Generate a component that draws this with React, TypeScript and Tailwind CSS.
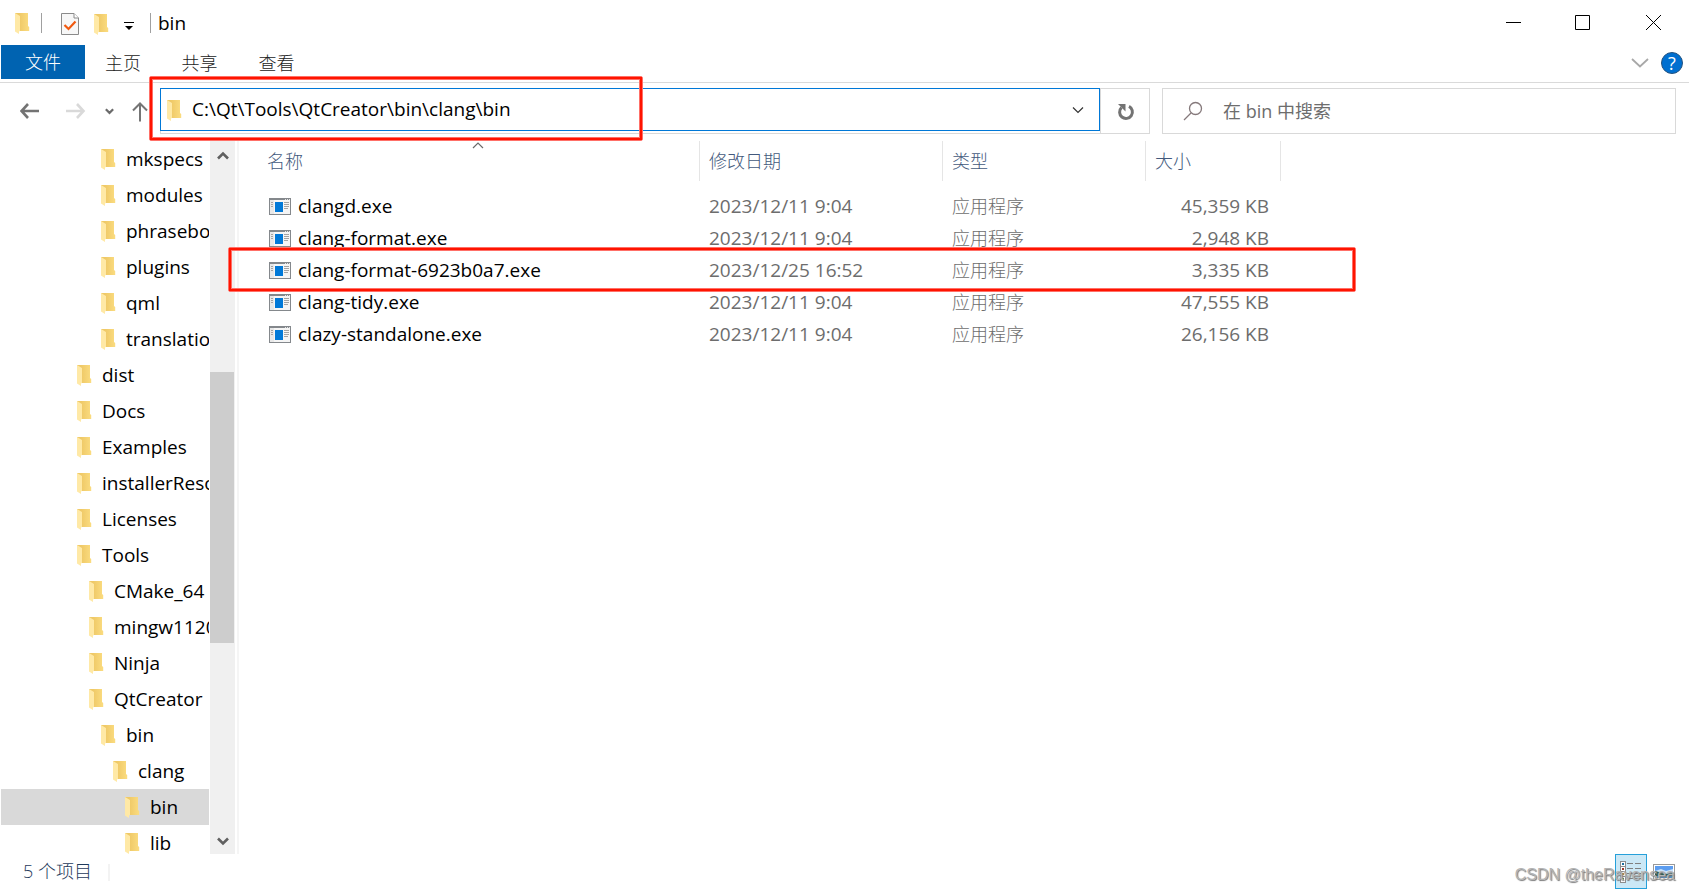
import type { ReactNode } from "react";

type TreeItem = { name: string; level: 0 | 1 | 2 | 3 | 4; selected?: boolean };

const indents = {
  0: "pl-[77px]",
  1: "pl-[89px]",
  2: "pl-[101px]",
  3: "pl-[113px]",
  4: "pl-[125px]",
};

const tree: TreeItem[] = [
  { name: "mkspecs", level: 2 },
  { name: "modules", level: 2 },
  { name: "phrasebooks", level: 2 },
  { name: "plugins", level: 2 },
  { name: "qml", level: 2 },
  { name: "translations", level: 2 },
  { name: "dist", level: 0 },
  { name: "Docs", level: 0 },
  { name: "Examples", level: 0 },
  { name: "installerResources", level: 0 },
  { name: "Licenses", level: 0 },
  { name: "Tools", level: 0 },
  { name: "CMake_64", level: 1 },
  { name: "mingw1120_64", level: 1 },
  { name: "Ninja", level: 1 },
  { name: "QtCreator", level: 1 },
  { name: "bin", level: 2 },
  { name: "clang", level: 3 },
  { name: "bin", level: 4, selected: true },
  { name: "lib", level: 4 },
];

const files = [
  { name: "clangd.exe", date: "2023/12/11 9:04", size: "45,359 KB" },
  { name: "clang-format.exe", date: "2023/12/11 9:04", size: "2,948 KB" },
  { name: "clang-format-6923b0a7.exe", date: "2023/12/25 16:52", size: "3,335 KB", marked: true },
  { name: "clang-tidy.exe", date: "2023/12/11 9:04", size: "47,555 KB" },
  { name: "clazy-standalone.exe", date: "2023/12/11 9:04", size: "26,156 KB" },
];

function FolderIcon() {
  return (
    <svg width="15" height="22" viewBox="0 0 15 22" className="shrink-0" aria-hidden="true">
      <defs>
        <linearGradient id="folder-back" x1="0" x2="1">
          <stop offset="0.3" stopColor="#efc967" />
          <stop offset="1" stopColor="#fbdc80" />
        </linearGradient>
      </defs>
      <path d="M0 1H13V14L14.2 15V19H3Z" fill="url(#folder-back)" />
      <path d="M0 1L5 4V19L4 19.5V22L0 19.5Z" fill="#ffe9a6" />
    </svg>
  );
}

function AppIcon() {
  return (
    <svg width="22" height="17" viewBox="0 0 22 17" className="shrink-0" shapeRendering="crispEdges" aria-hidden="true">
      <rect width="22" height="17" fill="#84888c" />
      <rect x="1" y="2" width="20" height="14" fill="#f5f5f5" />
      <rect x="1" y="2" width="4" height="14" fill="#e8e8e8" />
      <path d="M16 1h1v1h-1zM18 1h1v1h-1zM20 1h1v1h-1z" fill="#e6e6e6" />
      <rect x="6" y="4" width="8" height="10" fill="#0078d7" />
      <path d="M2 4h2v1H2zM2 6h2v1H2zM2 8h2v1H2zM15 4h5v1h-5zM15 6h5v1h-5zM15 8h5v1h-5zM15 10h4v1h-4z" fill="#a3a3a3" />
    </svg>
  );
}

function Chevron({ d, color, width = 1, size = 12 }: { d: string; color: string; width?: number; size?: number }) {
  return (
    <svg width={size} height={size} viewBox="0 0 12 12" fill="none" stroke={color} strokeWidth={width} aria-hidden="true">
      <path d={d} />
    </svg>
  );
}

function RedFrame({ className }: { className: string }) {
  return (
    <div className={`pointer-events-none absolute z-10 rounded-[2px] border border-[#ff7068] ${className}`}>
      <div className="h-full border-2 border-[#ff1400]">
        <div className="h-full border border-[#ff7068]" />
      </div>
    </div>
  );
}

function IconButton({ label, className, children }: { label: string; className: string; children: ReactNode }) {
  return (
    <button type="button" aria-label={label} className={`flex shrink-0 items-center justify-center ${className}`}>
      {children}
    </button>
  );
}

function TitleBar() {
  return (
    <header className="flex h-[45px] items-center pl-[15px]">
      <FolderIcon />
      <div className="ml-[11px] h-5 w-px bg-[#a0a0a0]" />
      <IconButton label="属性" className="ml-[19px] h-6 w-[18px]">
        <svg width="18" height="22" viewBox="0 0 18 22" fill="none" className="mt-[2px]" aria-hidden="true">
          <path d="M0.5 0.5H13L17.5 5V21.5H0.5Z" fill="#f7f7f7" stroke="#8a8a8a" />
          <path d="M13 0.5V5H17.5" fill="#fff" stroke="#8a8a8a" />
          <path d="M3.5 12L7.5 16L14.5 8.5" stroke="#f0590f" strokeWidth="2.2" />
        </svg>
      </IconButton>
      <IconButton label="新建文件夹" className="ml-[15px] h-6 w-[15px]">
        <div className="mt-[2px]">
          <FolderIcon />
        </div>
      </IconButton>
      <IconButton label="自定义快速访问工具栏" className="ml-[15px] h-6 w-[10px]">
        <svg width="10" height="8" viewBox="0 0 10 8" className="mt-[6px]" aria-hidden="true">
          <path d="M0 0H10V1H0ZM1 4H9L5 8Z" fill="#000" />
        </svg>
      </IconButton>
      <div className="ml-4 h-5 w-px bg-[#a0a0a0]" />
      <h1 className="ml-[7px] text-[19px] leading-6 text-black">bin</h1>
      <div className="ml-auto flex">
        <IconButton label="最小化" className="h-[45px] w-[69px]">
          <svg width="15" height="15" viewBox="0 0 15 15" aria-hidden="true">
            <path d="M0 7.5H15" stroke="#000" />
          </svg>
        </IconButton>
        <IconButton label="最大化" className="h-[45px] w-[69px]">
          <svg width="15" height="15" viewBox="0 0 15 15" fill="none" aria-hidden="true">
            <path d="M0.5 0.5H14.5V14.5H0.5Z" stroke="#000" />
          </svg>
        </IconButton>
        <IconButton label="关闭" className="h-[45px] w-[72px]">
          <svg width="15" height="15" viewBox="0 0 15 15" fill="none" aria-hidden="true">
            <path d="M0 0L15 15M15 0L0 15" stroke="#000" />
          </svg>
        </IconButton>
      </div>
    </header>
  );
}

function Ribbon() {
  return (
    <nav className="flex h-[38px] items-start border-b border-[#dadada] pl-px text-[18px] font-light text-[#222]">
      <button type="button" className="h-[34px] w-[84px] bg-[#0063b1] text-white">文件</button>
      <button type="button" className="h-9 w-[76px]">主页</button>
      <button type="button" className="h-9 w-[77px]">共享</button>
      <button type="button" className="h-9 w-[77px]">查看</button>
      <div className="ml-auto flex h-9 items-center gap-3 pr-[6px]">
        <IconButton label="展开功能区" className="h-6 w-[18px]">
          <svg width="18" height="12" viewBox="0 0 18 12" fill="none" aria-hidden="true">
            <path d="M1 2L9 9.5L17 2" stroke="#a8a8a8" strokeWidth="1.8" />
          </svg>
        </IconButton>
        <IconButton label="帮助" className="size-[22px] rounded-full border border-[#24527f] bg-[#006fd0] text-[18px] leading-none font-normal text-white">
          ?
        </IconButton>
      </div>
    </nav>
  );
}

function AddressRow() {
  return (
    <div className="relative flex h-[58px] items-start pt-[5px] pr-[13px]">
      <div className="flex h-[46px] w-[160px] shrink-0 items-center">
        <IconButton label="返回" className="ml-5 w-5">
          <svg width="20" height="16" viewBox="0 0 20 16" fill="none" stroke="#737373" strokeWidth="2.6" aria-hidden="true">
            <path d="M19 8H1.5M8 1L1.5 8L8 15" />
          </svg>
        </IconButton>
        <IconButton label="前进" className="ml-[26px] w-5">
          <svg width="20" height="16" viewBox="0 0 20 16" fill="none" stroke="#d9d9d9" strokeWidth="2.6" aria-hidden="true">
            <path d="M0 8H17.5M11 1L17.5 8L11 15" />
          </svg>
        </IconButton>
        <IconButton label="最近浏览的位置" className="ml-[18px] w-[11px]">
          <Chevron d="M2 4L6 8L10 4" color="#6b6b6b" width={2.4} />
        </IconButton>
        <IconButton label="上移" className="ml-[17px] w-4">
          <svg width="16" height="20" viewBox="0 0 16 20" fill="none" stroke="#757575" strokeWidth="2" className="mt-[2px]" aria-hidden="true">
            <path d="M8 19.5V2M1 8.5L8 1.5L15 8.5" />
          </svg>
        </IconButton>
      </div>
      <div className="flex h-[46px] min-w-0 flex-1 border border-[#d9d9d9]">
        <div className="-mt-px -ml-px flex h-[43px] min-w-0 flex-1 items-center border border-[#0078d7] pl-[6px]">
          <FolderIcon />
          <input
            aria-label="地址"
            defaultValue="C:\Qt\Tools\QtCreator\bin\clang\bin"
            className="ml-[10px] h-8 min-w-0 flex-1 pb-[2px] text-[19px] text-black outline-none"
          />
          <IconButton label="上一个位置" className="h-full w-[42px]">
            <Chevron d="M1 3.5L6 8.5L11 3.5" color="#333" width={1.2} />
          </IconButton>
        </div>
        <IconButton label="刷新" className="w-[49px] border-l border-[#d9d9d9] pl-[2px]">
          <svg width="18" height="18" viewBox="0 0 18 18" fill="none" className="mt-[2px]" aria-hidden="true">
            <path d="M12 3.4A6.4 6.4 0 1 1 4.5 4.5" stroke="#737373" strokeWidth="3" />
            <path d="M1 1H8.5V8.5Z" fill="#737373" />
          </svg>
        </IconButton>
      </div>
      <label className="ml-3 flex h-[46px] w-[514px] shrink-0 items-center border border-[#d9d9d9] pl-5">
        <svg width="20" height="20" viewBox="0 0 20 20" fill="none" stroke="#85797b" strokeWidth="1.3" aria-hidden="true">
          <circle cx="12.5" cy="7.5" r="6" />
          <path d="M8 12L1 19" />
        </svg>
        <input
          type="search"
          aria-label="搜索"
          placeholder="在 bin 中搜索"
          className="ml-5 h-8 min-w-0 flex-1 text-[18px] outline-none placeholder:text-[#6d6d6d]"
        />
      </label>
      <RedFrame className="-top-[7px] left-[149px] h-[65px] w-[494px]" />
    </div>
  );
}

function Sidebar() {
  return (
    <aside className="flex w-[239px] shrink-0 border-r-2 border-[#f5f5f5]">
      <ul className="ml-px w-[208px] overflow-hidden">
        {tree.map((item, i) => (
          <li key={i}>
            <a
              href="#"
              className={`-ml-px flex h-9 items-center gap-[10px] whitespace-nowrap text-[19px] text-black ${indents[item.level]} ${
                item.selected ? "bg-[#d9d9d9]" : ""
              }`}
            >
              <FolderIcon />
              {item.name}
            </a>
          </li>
        ))}
      </ul>
      <div className="ml-px flex w-[25px] flex-col items-center bg-[#f0f0f0]">
        <IconButton label="向上滚动" className="h-[30px] w-full">
          <Chevron d="M1 8.5L6 3.5L11 8.5" color="#606060" width={2.6} />
        </IconButton>
        <div className="flex min-h-0 w-full flex-1 flex-col">
          <div className="flex-[201]" />
          <div className="mr-px flex-[270] bg-[#cdcdcd]" />
          <div className="flex-[184]" />
        </div>
        <IconButton label="向下滚动" className="h-[27px] w-full">
          <Chevron d="M1 3.5L6 8.5L11 3.5" color="#606060" width={2.6} />
        </IconButton>
      </div>
    </aside>
  );
}

function FileList() {
  return (
    <main className="min-w-0 flex-1">
      <table className="table-fixed border-separate border-spacing-0 text-left">
        <colgroup>
          <col className="w-[461px]" />
          <col className="w-[243px]" />
          <col className="w-[203px]" />
          <col className="w-[135px]" />
        </colgroup>
        <thead className="text-[18px] text-[#43597c]">
          <tr className="h-10">
            <th className="relative border-r border-[#e5e5e5] pl-7 font-light">
              名称
              <span className="absolute -top-px left-[233px]">
                <Chevron d="M1 8L6 3L11 8" color="#6b6b6b" width={1.2} />
              </span>
            </th>
            <th className="border-r border-[#e5e5e5] pl-[9px] font-light">修改日期</th>
            <th className="border-r border-[#e5e5e5] pl-[9px] font-light">类型</th>
            <th className="border-r border-[#e5e5e5] pl-[9px] font-light">大小</th>
          </tr>
        </thead>
        <tbody className="text-[19px] leading-6 text-[#6d6d6d]">
          <tr className="h-[9px]" aria-hidden="true" />
          {files.map((file) => (
            <tr key={file.name} className="h-8">
              <td className="relative pl-[30px] text-black">
                <div className="flex items-center gap-[7px]">
                  <AppIcon />
                  {file.name}
                </div>
                {file.marked && <RedFrame className="-top-[7px] -left-[11px] h-[45px] w-[1128px]" />}
              </td>
              <td className="pl-[9px]">{file.date}</td>
              <td className="pl-[9px] text-[18px] font-light">应用程序</td>
              <td className="pr-3 text-right">{file.size}</td>
            </tr>
          ))}
        </tbody>
      </table>
    </main>
  );
}

function StatusBar() {
  return (
    <footer className="relative flex h-9 items-center pl-[23px] text-[18px] text-[#1e395b]">
      <span className="pb-[2px] font-light">5 个项目</span>
      <div className="ml-4 h-[17px] w-[2px] bg-[#f3f3f3]" />
      <div className="ml-auto flex items-start gap-[6px] self-start pr-[14px]">
        <IconButton label="详细信息" className="h-[35px] w-8 border border-[#26a0da] bg-[#cbe8f6]">
          <svg width="22" height="22" viewBox="0 0 22 22" shapeRendering="crispEdges" fill="none" aria-hidden="true">
            <path d="M0.5 0.5H5.5V21.5H0.5ZM0.5 5.5H5.5M0.5 10.5H5.5M0.5 15.5H5.5" fill="#fff" stroke="#8d8d8d" />
            <path d="M7 2.5H13M15 2.5H21M7 7.5H13M15 7.5H21M7 12.5H13M15 12.5H21M7 17.5H13M15 17.5H21" stroke="#808080" />
            <path d="M2 2h2v2H2z" fill="#1e6f9f" />
            <path d="M2 7h2v2H2z" fill="#9f3a2c" />
            <path d="M2 12h2v2H2z" fill="#b08b3e" />
            <path d="M2 17h2v2H2z" fill="#3c8b54" />
          </svg>
        </IconButton>
        <IconButton label="大图标" className="h-[35px] w-[22px]">
          <svg width="22" height="16" viewBox="0 0 22 16" aria-hidden="true">
            <rect x="0.5" y="0.5" width="21" height="15" fill="#fff" stroke="#999" />
            <rect x="2" y="2" width="18" height="7" fill="#5c9df0" />
            <path d="M2 7L8 5L13 7L20 5V10H2Z" fill="#c9e3fa" />
            <path d="M2 7L6 8L12 10L20 9V12H2Z" fill="#2e5a4c" />
            <rect x="2" y="12" width="18" height="2" fill="#4d8bc9" />
          </svg>
        </IconButton>
      </div>
      <span className="pointer-events-none absolute right-[14px] bottom-[3px] font-['Liberation_Sans',sans-serif] text-[16px] leading-6 text-[#b4b4b4] [text-shadow:1px_1px_1px_#777]">
        CSDN @theRavensea
      </span>
    </footer>
  );
}

export default function App() {
  return (
    <div className="flex h-screen flex-col overflow-hidden bg-white font-['Open_Sans','Noto_Sans_CJK_SC',sans-serif]">
      <TitleBar />
      <Ribbon />
      <AddressRow />
      <div className="flex min-h-0 flex-1">
        <Sidebar />
        <FileList />
      </div>
      <StatusBar />
    </div>
  );
}
